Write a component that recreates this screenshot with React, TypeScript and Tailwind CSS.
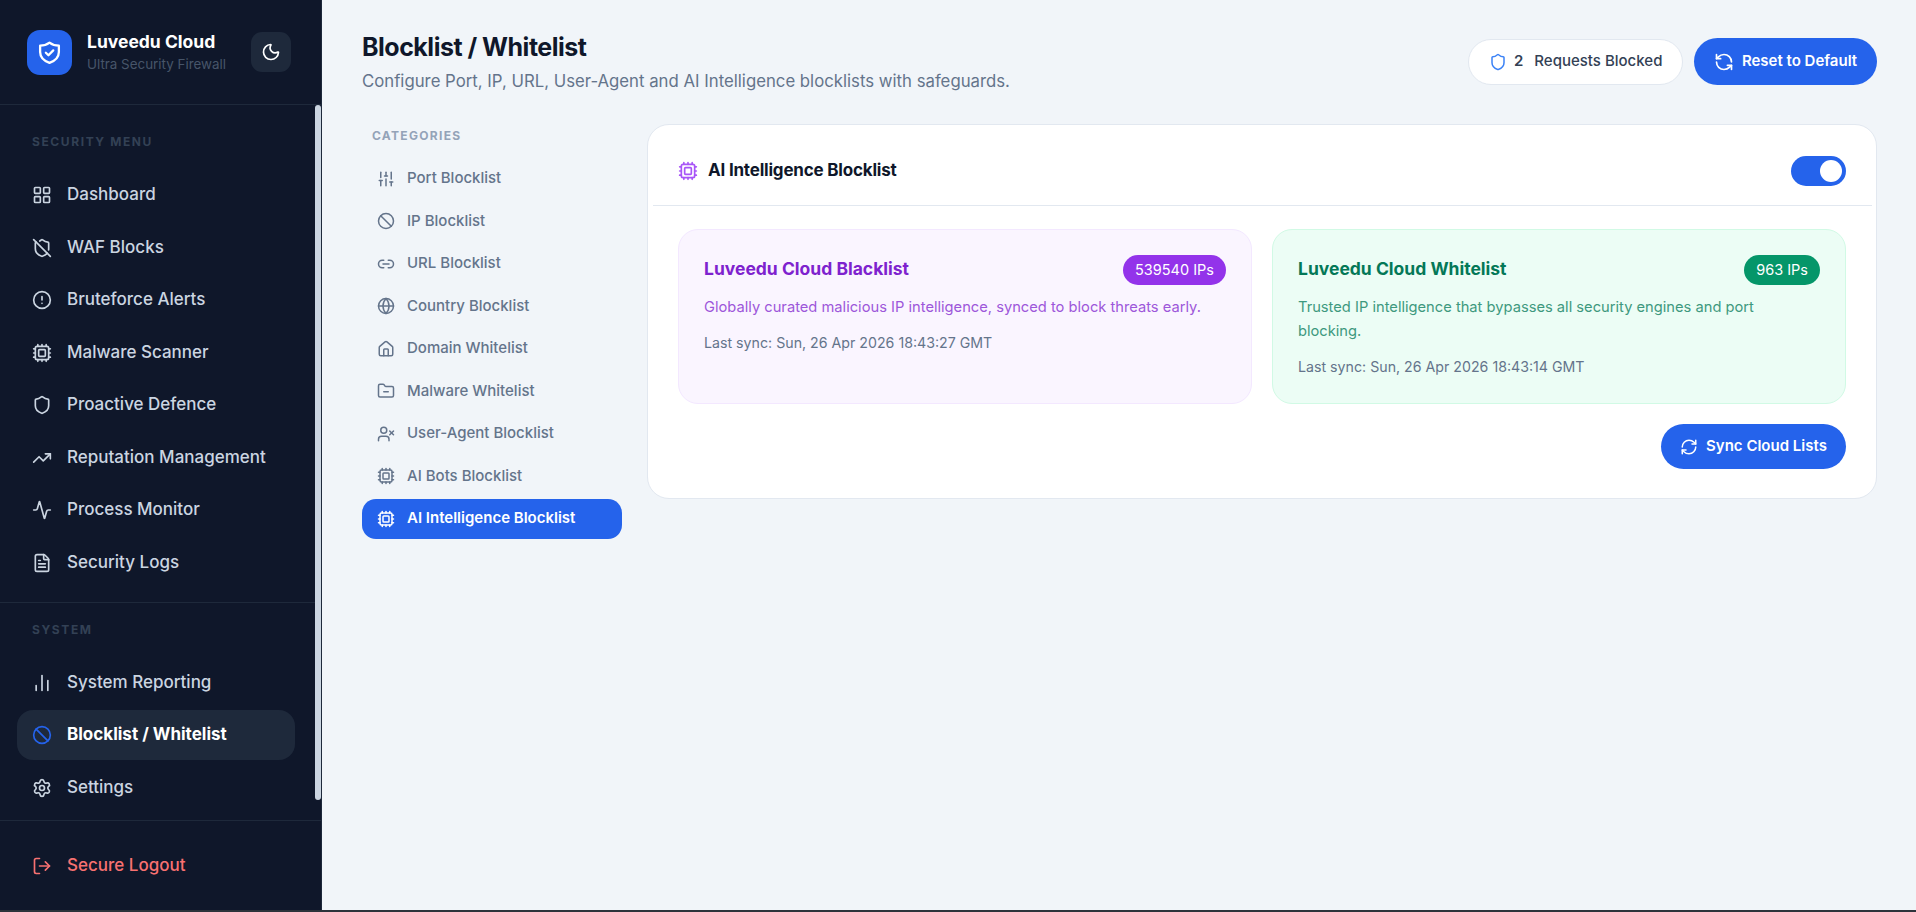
import {
  Activity,
  Ban,
  ChartNoAxesColumn,
  CircleAlert,
  Cpu,
  FileText,
  FolderMinus,
  Globe,
  House,
  LayoutGrid,
  Link2,
  LogOut,
  Moon,
  RefreshCcw,
  RefreshCw,
  Settings,
  Shield,
  ShieldOff,
  SlidersVertical,
  TrendingUp,
  UserX,
} from 'lucide-react';

const securityMenu = [
  { label: 'Dashboard', icon: LayoutGrid },
  { label: 'WAF Blocks', icon: ShieldOff },
  { label: 'Bruteforce Alerts', icon: CircleAlert },
  { label: 'Malware Scanner', icon: Cpu },
  { label: 'Proactive Defence', icon: Shield },
  { label: 'Reputation Management', icon: TrendingUp },
  { label: 'Process Monitor', icon: Activity },
  { label: 'Security Logs', icon: FileText },
];

const categories = [
  { label: 'Port Blocklist', icon: SlidersVertical },
  { label: 'IP Blocklist', icon: Ban },
  { label: 'URL Blocklist', icon: Link2 },
  { label: 'Country Blocklist', icon: Globe },
  { label: 'Domain Whitelist', icon: House },
  { label: 'Malware Whitelist', icon: FolderMinus },
  { label: 'User-Agent Blocklist', icon: UserX },
  { label: 'AI Bots Blocklist', icon: Cpu },
];

function LogoShield() {
  return (
    <svg viewBox="0 0 24 24" className="h-[25px] w-[25px]" fill="none" stroke="white" strokeWidth={2.2} strokeLinecap="round" strokeLinejoin="round">
      <path d="M12 2.5C14.5 4.4 17.6 5.4 21 5.5V11.5C21 16.4 17.2 20 12 22C6.8 20 3 16.4 3 11.5V5.5C6.4 5.4 9.5 4.4 12 2.5Z" />
      <path d="M8.5 12.2L11 14.6L15.6 10" />
    </svg>
  );
}

function NavItem({ label, icon: Icon }: { label: string; icon: typeof Cpu }) {
  return (
    <div className="flex h-[50px] items-center gap-[15px] px-[15px] text-[17px] font-medium text-[#cbd5e1]">
      <Icon className="h-5 w-5 shrink-0" strokeWidth={2} />
      {label}
    </div>
  );
}

function Sidebar() {
  return (
    <aside className="relative flex w-[322px] shrink-0 flex-col border-r border-[#1e293b] bg-[#0f172a]">
      <div className="flex h-[105px] shrink-0 items-center justify-between border-b border-[#1e293b] pl-[27px] pr-[30px]">
        <div className="flex items-center gap-[15px]">
          <div className="flex h-[45px] w-[45px] items-center justify-center rounded-[13px] bg-[#2563eb]">
            <LogoShield />
          </div>
          <div className="flex flex-col">
            <span className="text-[17.5px] font-bold leading-[24px] text-white">Luveedu Cloud</span>
            <span className="text-[13.4px] leading-[20px] text-[#475569]">Ultra Security Firewall</span>
          </div>
        </div>
        <button className="flex h-10 w-10 items-center justify-center rounded-[11px] bg-[#1e293b] text-white">
          <Moon className="h-5 w-5" strokeWidth={2} />
        </button>
      </div>

      <nav className="flex min-h-0 flex-1 flex-col pl-[17px] pr-[26px]">
        <p className="mb-[20px] mt-[29px] pl-[15px] text-[12px] font-bold leading-[16px] tracking-[1.6px] text-[#334155]">
          SECURITY MENU
        </p>
        <div className="flex flex-col gap-[2.5px]">
          {securityMenu.map((item) => (
            <NavItem key={item.label} {...item} />
          ))}
        </div>
        <div className="-ml-[17px] -mr-[26px] mt-[14px] border-t border-[#1e293b]" />
        <p className="mb-[20px] mt-[19px] pl-[15px] text-[12px] font-bold leading-[16px] tracking-[1.6px] text-[#334155]">
          SYSTEM
        </p>
        <div className="flex flex-col gap-[2.5px]">
          <NavItem label="System Reporting" icon={ChartNoAxesColumn} />
          <div className="flex h-[50px] items-center gap-[15px] rounded-[16px] bg-[#1e293b] px-[15px] text-[17px] font-bold text-white">
            <Ban className="h-5 w-5 shrink-0 text-[#2563eb]" strokeWidth={2} />
            Blocklist / Whitelist
          </div>
          <NavItem label="Settings" icon={Settings} />
        </div>
      </nav>

      <div className="flex h-[90px] shrink-0 items-center border-t border-[#1e293b] pl-[32px] text-[17px] font-medium text-[#f87171]">
        <LogOut className="mr-[15px] h-5 w-5" strokeWidth={2} />
        Secure Logout
      </div>

      <div className="absolute bottom-[110px] right-0 top-[105px] w-[6px] rounded-full bg-[#cbd5e1]" />
    </aside>
  );
}

function Categories() {
  return (
    <div className="w-[260px] shrink-0">
      <p className="mb-[14.5px] ml-[10px] mt-[4px] text-[12px] font-bold leading-[16px] tracking-[1.3px] text-[#94a3b8]">
        CATEGORIES
      </p>
      <div className="flex flex-col gap-[2.5px]">
        {categories.map(({ label, icon: Icon }) => (
          <div key={label} className="flex h-10 items-center gap-[12px] px-[15px] text-[15px] font-medium text-[#64748b]">
            <Icon className="h-[18px] w-[18px] shrink-0" strokeWidth={2} />
            {label}
          </div>
        ))}
        <div className="flex h-10 items-center gap-[12px] rounded-[14px] bg-[#2563eb] px-[15px] text-[15px] font-semibold text-white">
          <Cpu className="h-[18px] w-[18px] shrink-0" strokeWidth={2} />
          AI Intelligence Blocklist
        </div>
      </div>
    </div>
  );
}

function CloudCard({
  title,
  count,
  text,
  sync,
  boxClass,
  titleClass,
  badgeClass,
  textClass,
}: {
  title: string;
  count: string;
  text: string;
  sync: string;
  boxClass: string;
  titleClass: string;
  badgeClass: string;
  textClass: string;
}) {
  return (
    <div className={`h-[175px] flex-1 rounded-[20px] border px-[25px] pt-[25px] ${boxClass}`}>
      <div className="flex items-center justify-between">
        <span className={`mb-[2px] text-[17.5px] font-bold ${titleClass}`}>{title}</span>
        <span className={`flex h-[30px] items-center rounded-full px-[12px] text-[14.5px] font-normal text-white ${badgeClass}`}>
          {count}
        </span>
      </div>
      <p className={`mt-[10px] text-[14.7px] leading-[24px] ${textClass}`}>{text}</p>
      <p className="mt-[12px] text-[14.2px] leading-[24px] text-[#64748b]">Last sync: {sync}</p>
    </div>
  );
}

export default function App() {
  return (
    <div className="flex h-[912px] w-[1916px] overflow-hidden border-b-2 border-[#2d333b] bg-[#f1f5f9] font-['Inter',sans-serif]">
      <Sidebar />
      <main className="flex-1 pl-[40px] pr-[39px] pt-[38px]">
        <div className="flex items-start justify-between">
          <div>
            <h1 className="text-[25px] font-bold leading-[18px] tracking-[-0.5px] text-[#0f172a]">Blocklist / Whitelist</h1>
            <p className="mt-[13px] text-[16.75px] leading-[24px] text-[#64748b]">
              Configure Port, IP, URL, User-Agent and AI Intelligence blocklists with safeguards.
            </p>
          </div>
          <div className="flex items-center gap-[11px]">
            <div className="flex h-[46px] w-[215px] items-center rounded-full border border-[#e2e8f0] bg-white pl-[20px] text-[15px] font-medium text-[#334155]">
              <Shield className="h-[18px] w-[18px] text-[#3b82f6]" strokeWidth={2} />
              <span className="ml-[7px] font-semibold">2</span>
              <span className="ml-[11px]">Requests Blocked</span>
            </div>
            <button className="flex h-[47px] w-[183px] items-center justify-center gap-[8px] rounded-full bg-[#2563eb] text-[15px] font-semibold text-white">
              <RefreshCcw className="h-5 w-5" strokeWidth={2} />
              Reset to Default
            </button>
          </div>
        </div>

        <div className="mt-[31px] flex items-start gap-[25px]">
          <Categories />
          <section className="h-[375px] flex-1 rounded-[22px] border border-[#e2e8f0] bg-white">
            <div className="ml-[5px] mr-[4px] flex h-[81px] items-center justify-between border-b border-[#e2e8f0] pl-[25px] pr-[26px] pt-[11px]">
              <div className="flex items-center gap-[10px]">
                <Cpu className="h-5 w-5 text-[#a855f7]" strokeWidth={2} />
                <span className="text-[17px] font-bold tracking-[-0.2px] text-[#0f172a]">AI Intelligence Blocklist</span>
              </div>
              <div className="flex h-[30px] w-[55px] items-center justify-end rounded-full bg-[#2563eb] pr-[4px]">
                <span className="h-[22px] w-[22px] rounded-full bg-white" />
              </div>
            </div>
            <div className="flex gap-[20px] pl-[30px] pr-[30px] pt-[23px]">
              <CloudCard
                title="Luveedu Cloud Blacklist"
                count="539540 IPs"
                text="Globally curated malicious IP intelligence, synced to block threats early."
                sync="Sun, 26 Apr 2026 18:43:27 GMT"
                boxClass="border-[#f3e8ff] bg-[#faf5ff]"
                titleClass="text-[#7e22ce]"
                badgeClass="bg-[#9333ea]"
                textClass="text-[#9d57da]"
              />
              <CloudCard
                title="Luveedu Cloud Whitelist"
                count="963 IPs"
                text="Trusted IP intelligence that bypasses all security engines and port blocking."
                sync="Sun, 26 Apr 2026 18:43:14 GMT"
                boxClass="border-[#d1fae5] bg-[#ecfdf5]"
                titleClass="text-[#047857]"
                badgeClass="bg-[#059669]"
                textClass="text-[#3e997e]"
              />
            </div>
            <div className="flex justify-end pr-[30px] pt-[20px]">
              <button className="flex h-[45px] w-[185px] items-center justify-center gap-[8px] rounded-full bg-[#2563eb] text-[15px] font-semibold text-white">
                <RefreshCw className="h-[18px] w-[18px]" strokeWidth={2} />
                Sync Cloud Lists
              </button>
            </div>
          </section>
        </div>
      </main>
    </div>
  );
}
